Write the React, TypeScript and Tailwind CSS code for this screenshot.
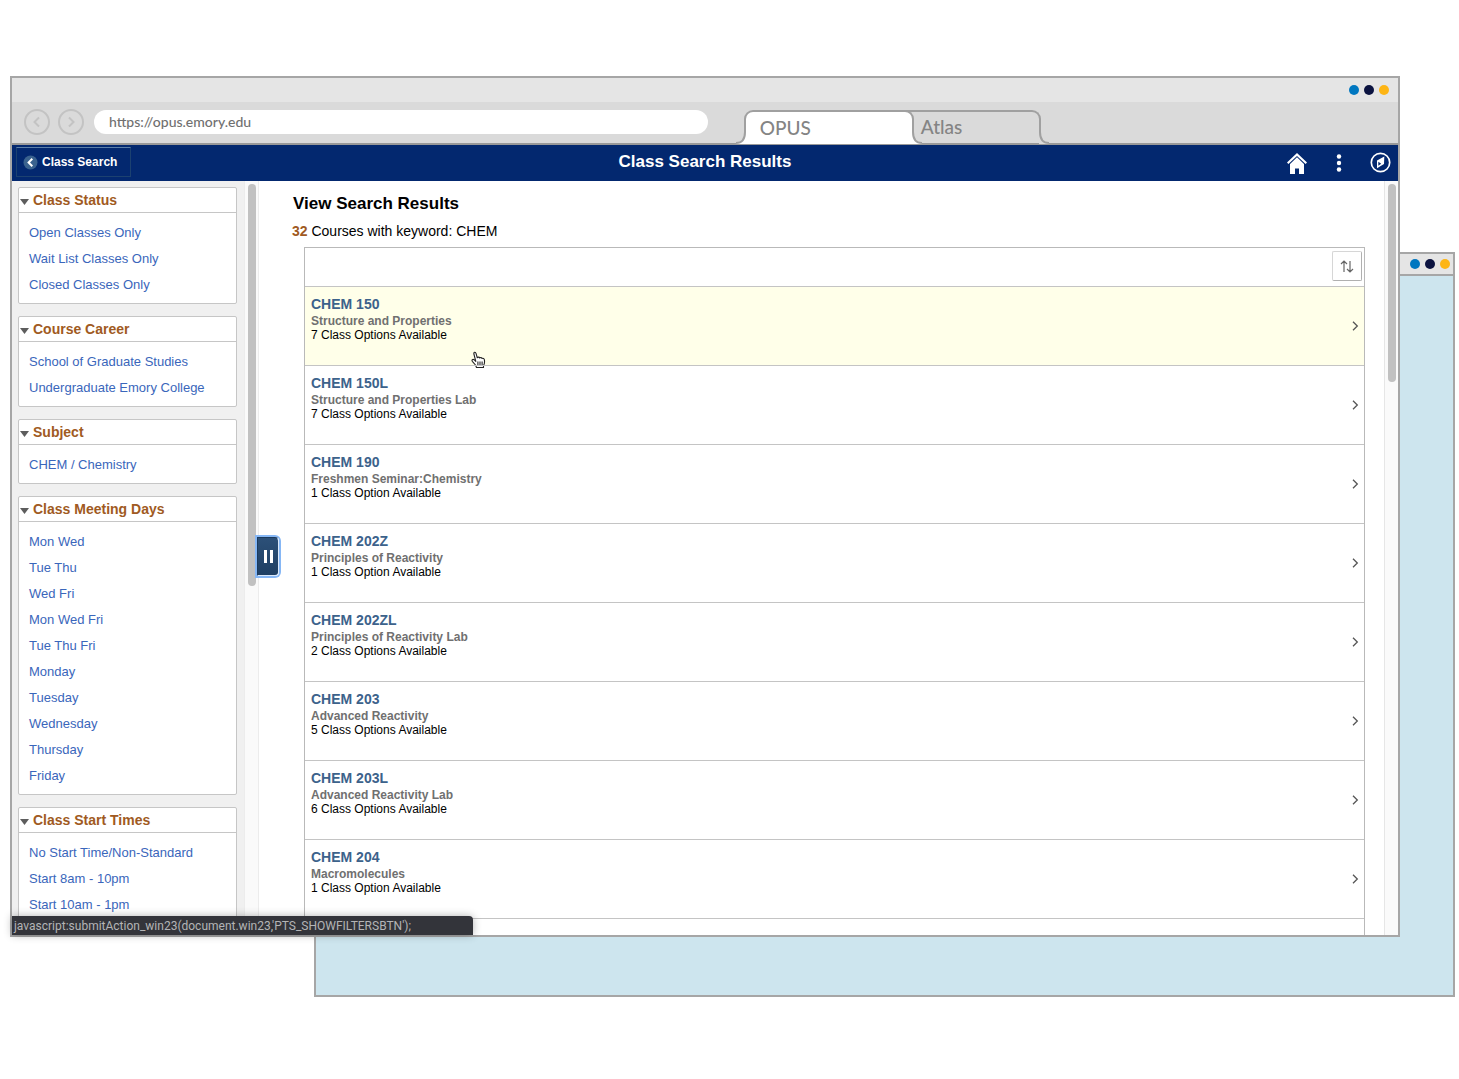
import React from "react";

const filters = [
  { title: "Class Status", items: ["Open Classes Only", "Wait List Classes Only", "Closed Classes Only"] },
  { title: "Course Career", items: ["School of Graduate Studies", "Undergraduate Emory College"] },
  { title: "Subject", items: ["CHEM / Chemistry"] },
  {
    title: "Class Meeting Days",
    items: ["Mon Wed", "Tue Thu", "Wed Fri", "Mon Wed Fri", "Tue Thu Fri", "Monday", "Tuesday", "Wednesday", "Thursday", "Friday"],
  },
  { title: "Class Start Times", items: ["No Start Time/Non-Standard", "Start 8am - 10pm", "Start 10am - 1pm"] },
];

const courses = [
  { code: "CHEM 150", name: "Structure and Properties", options: "7 Class Options Available" },
  { code: "CHEM 150L", name: "Structure and Properties Lab", options: "7 Class Options Available" },
  { code: "CHEM 190", name: "Freshmen Seminar:Chemistry", options: "1 Class Option Available" },
  { code: "CHEM 202Z", name: "Principles of Reactivity", options: "1 Class Option Available" },
  { code: "CHEM 202ZL", name: "Principles of Reactivity Lab", options: "2 Class Options Available" },
  { code: "CHEM 203", name: "Advanced Reactivity", options: "5 Class Options Available" },
  { code: "CHEM 203L", name: "Advanced Reactivity Lab", options: "6 Class Options Available" },
  { code: "CHEM 204", name: "Macromolecules", options: "1 Class Option Available" },
];

function WindowDots() {
  return (
    <div className="flex gap-[5px]">
      <span className="size-[10px] rounded-full bg-[#0077c0]" />
      <span className="size-[10px] rounded-full bg-[#0b1340]" />
      <span className="size-[10px] rounded-full bg-[#fdb515]" />
    </div>
  );
}

function RoundButton({ label, d }: { label: string; d: string }) {
  return (
    <button aria-label={label} className="shrink-0 text-[#c3c3c3]">
      <svg width="26" height="26" viewBox="0 0 26 26" fill="none" stroke="currentColor" strokeWidth="2">
        <circle cx="13" cy="13" r="12" />
        <path d={d} />
      </svg>
    </button>
  );
}

function TabFoot({ className, fill }: { className: string; fill: string }) {
  return (
    <svg className={className} width="10" height="12" viewBox="0 0 10 12" fill="none">
      <path d="M0 0H1C1 7 4 11 10 11V12H0Z" fill={fill} />
      <path d="M1 0C1 7 4 11 10 11" stroke="#a0a0a0" strokeWidth="2" />
    </svg>
  );
}

function BrowserBar() {
  return (
    <div className="flex h-[43px] shrink-0 items-end border-b-2 border-[#999] bg-[#dadada] pl-3">
      <div className="flex h-full flex-1 items-center gap-2 pb-[2px]">
        <RoundButton label="Back" d="M15 8.500L10.500 13L15 17.500" />
        <RoundButton label="Forward" d="M11 8.500L15.500 13L11 17.500" />
        <input
          aria-label="Address"
          defaultValue="https://opus.emory.edu"
          className="ml-[2px] h-6 min-w-0 flex-1 rounded-full bg-white px-[15px] font-['Lato',sans-serif] text-[14px] font-medium text-[#707070] outline-none"
        />
      </div>
      <div className="mr-[26%] ml-9 flex items-end font-['Lato',sans-serif] text-[19px] font-medium text-[#848484]">
        <button className="relative z-10 -mb-px h-[34px] w-[170px] rounded-t-[9px] border-2 border-b-0 border-[#a0a0a0] bg-white pl-[14px] text-left">
          OPUS
          <TabFoot className="absolute bottom-0 -left-[10px] -scale-x-100" fill="#fff" />
          <TabFoot className="absolute -right-[10px] bottom-0" fill="#fff" />
        </button>
        <button className="relative -ml-3 h-[33px] w-[139px] rounded-tr-[9px] border-2 border-b-0 border-l-0 border-[#a0a0a0] pl-[19px] text-left">
          Atlas
          <TabFoot className="absolute -right-[10px] -bottom-px" fill="#dadada" />
        </button>
      </div>
    </div>
  );
}

function AppHeader() {
  return (
    <header className="grid h-9 shrink-0 grid-cols-[1fr_auto_1fr] items-center bg-[#03286f] text-white">
      <button className="mb-[2px] ml-1 flex h-[30px] w-[115px] items-center gap-1 border border-[#1c4170] border-t-[#5b7fa8] pl-[6px] text-[12px] font-bold">
        <svg width="15" height="15" viewBox="0 0 15 15" fill="none">
          <circle cx="7.500" cy="7.500" r="7" fill="#3a628e" />
          <path d="M9.300 3.800L5.600 7.500L9.300 11.200" stroke="#fff" strokeWidth="2" />
        </svg>
        Class Search
      </button>
      <h1 className="pb-[2px] text-[17px] leading-5 font-bold">Class Search Results</h1>
      <div className="flex items-center justify-end pr-[7px]">
        <button aria-label="Home" className="mr-[29px]">
          <svg width="20" height="21" viewBox="0 0 20 21" fill="#fff">
            <path d="M10 0L0 9.600L1.400 11L10 2.900L18.600 11L20 9.600Z" />
            <path d="M10 4.300L3 11V21H8V15.500H12V21H17V11Z" />
          </svg>
        </button>
        <button aria-label="Actions" className="mr-[28px]">
          <svg width="6" height="20" viewBox="0 0 6 20" fill="#fff">
            <circle cx="3" cy="3.500" r="2.200" />
            <circle cx="3" cy="10" r="2.200" />
            <circle cx="3" cy="16.500" r="2.200" />
          </svg>
        </button>
        <button aria-label="Navigator" className="pb-[2px]">
          <svg width="21" height="21" viewBox="0 0 21 21" fill="none">
            <circle cx="10.500" cy="10.500" r="9.200" stroke="#fff" strokeWidth="1.700" />
            <path d="M14.300 4.500L14 12L7 16.300V8.500Z" fill="#fff" />
            <path d="M8.300 9.800L11.200 11.800L8.300 13.800Z" fill="#03286f" />
          </svg>
        </button>
      </div>
    </header>
  );
}

function FilterPanel({ title, items }: { title: string; items: string[] }) {
  return (
    <section className="shrink-0 rounded-[2px] border border-[#c6c6c6] bg-white">
      <h2 className="border-b border-[#c6c6c6]">
        <button className="flex h-6 w-full items-center gap-1 pt-px pl-px text-[14px] font-bold text-[#a05a22]">
          <svg width="9" height="6" viewBox="0 0 9 6" className="mt-[2px]">
            <path d="M0 0H9L4.500 6Z" fill="#5d5d5d" />
          </svg>
          {title}
        </button>
      </h2>
      <ul className="pt-[7px] pb-[5px] pl-[10px] text-[13px] leading-[26px] text-[#3a66bb]">
        {items.map((item) => (
          <li key={item}>
            <a href="#">{item}</a>
          </li>
        ))}
      </ul>
    </section>
  );
}

function HandCursor() {
  return (
    <svg className="absolute top-[64px] left-[166px]" width="16" height="18" viewBox="0 0 16 18" fill="#fff" stroke="#222" strokeWidth="1.100" strokeLinejoin="round">
      <path d="M5.500 16.500L4.500 14L1.300 10.300C.4 8.700 1.800 7.800 3.300 8.900L4.800 10.300L2.900 3C2.500 1 4.500 .6 5 2.400L6.300 6.800C7 5.800 8.300 6 8.700 7C9.500 6.200 10.700 6.500 11 7.500C12 7 13.200 7.600 13.400 8.800C13.800 11.500 13.600 13 12.500 14.500V16.500Z" />
      <path d="M6.900 10.500V14M9 10.500V14M11.100 10.500V14" />
    </svg>
  );
}

function Results() {
  return (
    <main className="min-w-0 flex-1 overflow-hidden pt-3 pr-[19px] pl-[33px]">
      <h2 className="pl-px text-[17px] leading-[22px] font-bold">View Search Results</h2>
      <p className="pt-[6px] text-[14px] leading-5">
        <b className="text-[#a05a22]">32</b> Courses with keyword: CHEM
      </p>
      <div className="mt-[6px] ml-3 border border-b-0 border-[#b9b9b9]">
        <div className="flex h-[38px] items-start justify-end pt-[3px] pr-[2px]">
          <button aria-label="Sort" className="flex size-[30px] items-center justify-center rounded-[2px] border border-[#d6d6d6] border-r-[#b0b0b0] border-b-[#b0b0b0]">
            <svg width="14" height="13" viewBox="0 0 14 13" fill="none" stroke="#666" strokeWidth="1.200">
              <path d="M4 12V1M1 4L4 1L7 4M10 1V12M7 9L10 12L13 9" />
            </svg>
          </button>
        </div>
        <ul>
          {courses.map((course, i) => (
            <li key={course.code} className="relative border-t border-[#c4c4c4]">
              <a
                href="#"
                className={
                  i === 0
                    ? "flex h-[78px] items-center justify-between bg-[#ffffe9] pr-[5px] pl-[6px]"
                    : "flex h-[78px] items-center justify-between pr-[5px] pl-[6px]"
                }
              >
                <span className="block h-full pt-[8px]">
                  <b className="block text-[14px] leading-[18px] text-[#3c628b]">{course.code}</b>
                  <b className="block text-[12px] leading-4 text-[#707070]">{course.name}</b>
                  <span className="block text-[12px] leading-3 text-black">{course.options}</span>
                </span>
                <svg width="7" height="10" viewBox="0 0 7 10" fill="none" stroke="#555" strokeWidth="1.300">
                  <path d="M1 .8L5.300 5L1 9.200" />
                </svg>
              </a>
              {i === 0 && <HandCursor />}
            </li>
          ))}
          <li className="h-10 border-t border-[#c4c4c4]" />
        </ul>
      </div>
    </main>
  );
}

export default function App() {
  return (
    <div className="relative flex h-screen flex-col overflow-hidden bg-white pt-[76px] pr-[59px] pb-[142px] pl-[10px] font-['Liberation_Sans',Arial,sans-serif] text-black">
      <div className="absolute top-[252px] right-[4px] bottom-[82px] left-[314px] border-2 border-[#a6a6a6] bg-[#cde5ee]">
        <div className="flex h-[22px] items-center justify-end border-b-2 border-[#a6a6a6] bg-[#e5e5e5] pr-[3px]">
          <WindowDots />
        </div>
      </div>

      <div className="relative flex min-h-0 flex-1 flex-col border-2 border-[#a6a6a6] bg-white">
        <div className="flex h-6 shrink-0 items-center justify-end bg-[#e5e5e5] pr-[9px]">
          <WindowDots />
        </div>
        <BrowserBar />
        <AppHeader />
        <div className="flex min-h-0 flex-1">
          <aside className="flex w-[232px] shrink-0 flex-col gap-3 overflow-hidden bg-[#f0f0f0] pt-[6px] pr-[7px] pl-[6px]">
            {filters.map((f) => (
              <FilterPanel key={f.title} title={f.title} items={f.items} />
            ))}
          </aside>
          <div className="relative w-[15px] shrink-0 border-x border-[#ececec] bg-[#fafafa] pt-[3px] pl-[3px]">
            <div className="h-[402px] w-2 rounded-full bg-[#c1c1c1]" />
            <button
              aria-label="Hide filters"
              className="absolute top-[356px] left-[12px] flex h-[39px] w-[22px] items-center justify-center gap-[3px] rounded-r-[4px] border border-[#1b3a5c] border-r-[#dbe9fa] border-b-[#dbe9fa] bg-linear-to-b from-[#2c5078] to-[#1f3f63] ring-2 ring-[#86b7f5]"
            >
              <span className="h-[13px] w-[3px] bg-white" />
              <span className="h-[13px] w-[3px] bg-white" />
            </button>
          </div>
          <Results />
          <div className="w-[14px] shrink-0 border-l border-[#e6e6e6] bg-[#fafafa] pt-[3px] pl-[3px]">
            <div className="h-[198px] w-2 rounded-full bg-[#c1c1c1]" />
          </div>
        </div>
        <div className="absolute bottom-0 left-0 h-[19px] w-[461px] rounded-tr-[4px] bg-[#33343a] pl-[2px] font-['Roboto',sans-serif] text-[12px] leading-[21px] text-[#b4b4b6] shadow-[0_0_8px_rgba(0,0,0,0.3)]">
          javascript:submitAction_win23(document.win23,'PTS_SHOWFILTERSBTN');
        </div>
      </div>
    </div>
  );
}
